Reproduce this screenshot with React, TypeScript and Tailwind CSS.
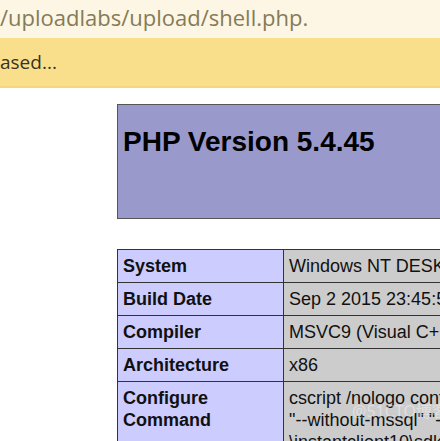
import React from 'react';

const rows = [
  { label: 'System', value: 'Windows NT DESKTOP-5RQ4 6.2 build 9200 (Windows 8 Professional Edition) i586' },
  { label: 'Build Date', value: 'Sep 2 2015 23:45:53' },
  { label: 'Compiler', value: 'MSVC9 (Visual C++ 2008)' },
  { label: 'Architecture', value: 'x86' },
];

export default function App() {
  return (
    <div className="w-[440px] h-[441px] overflow-hidden bg-white relative">
      {/* notice bars */}
      <div className="h-[38px] bg-[#fdf6e4] flex items-center">
        <span className="text-[22px] leading-none text-[#857b57] whitespace-nowrap -mt-[4px]" style={{ fontFamily: '"Open Sans", "Noto Sans", sans-serif' }}>
          /uploadlabs/upload/shell.php.
        </span>
      </div>
      <div className="h-[50px] bg-[#f9df8c] border-b-2 border-[#f4d67c] flex items-center">
        <span className="text-[19px] leading-none text-[#3a3220] whitespace-nowrap" style={{ fontFamily: '"Open Sans", "Noto Sans", sans-serif' }}>
          ased...
        </span>
      </div>

      {/* phpinfo */}
      <div className="pl-[117px] pt-[16px]" style={{ fontFamily: '"Liberation Sans", Arial, sans-serif' }}>
        <div className="w-[600px] h-[115px] bg-[#9999cc] border border-[#555] px-[5px] pt-[21px]">
          <h1 className="text-[28px] font-bold leading-[32px] text-black whitespace-nowrap">PHP Version 5.4.45</h1>
        </div>

        <table className="mt-[30px] w-[700px] table-fixed border-collapse text-[18px] text-[#111]">
          <colgroup>
            <col className="w-[166px]" />
            <col />
          </colgroup>
          <tbody>
            {rows.map((r) => (
              <tr key={r.label}>
                <td className="bg-[#ccccff] border border-[#333] px-[5px] py-[5px] leading-[22px] font-bold align-top whitespace-nowrap">
                  {r.label}
                </td>
                <td className="bg-[#cccccc] border border-[#333] px-[5px] py-[5px] leading-[22px] align-top whitespace-nowrap overflow-hidden">
                  {r.value}
                </td>
              </tr>
            ))}
            <tr>
              <td className="bg-[#ccccff] border border-[#333] px-[5px] py-[5px] leading-[22px] font-bold align-top">
                Configure<br />Command
              </td>
              <td className="bg-[#cccccc] border border-[#333] px-[5px] py-[5px] leading-[22px] align-top whitespace-nowrap overflow-hidden">
                cscript /nologo configure.js "--enable-snapshot-build"<br />
                "--without-mssql" "--without-pdo-mssql"<br />
                \instantclient10\sdk,shared"
              </td>
            </tr>
          </tbody>
        </table>
      </div>

      {/* watermark */}
      <span className="absolute left-[352px] top-[399px] text-[16px] text-white/40 whitespace-nowrap" style={{ fontFamily: '"Noto Sans", "Noto Sans CJK SC", sans-serif' }}>
        @51CTO博客
      </span>
    </div>
  );
}
